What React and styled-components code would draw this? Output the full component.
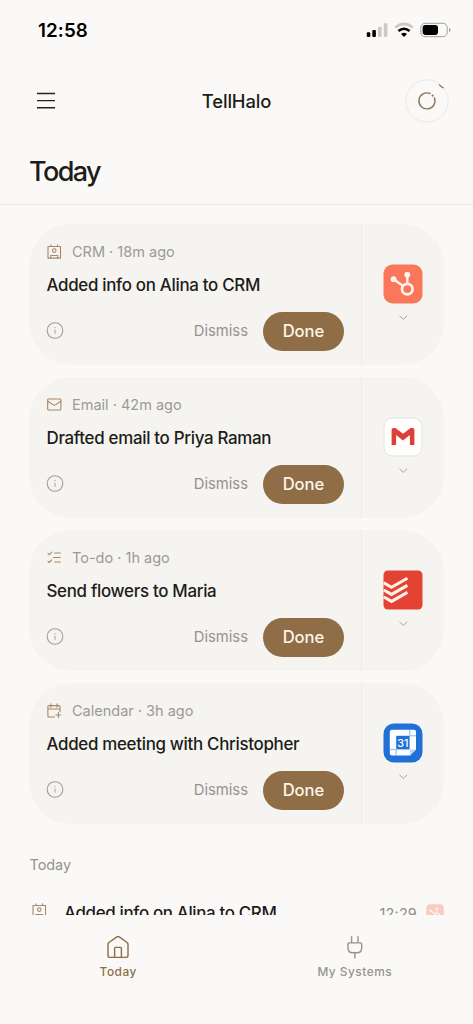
import React from "react";
import styled, { createGlobalStyle } from "styled-components";

const bronze = "#8f6d47";

const HaloIcon = () => (
  <svg width="44" height="44" viewBox="0 0 44 44" fill="none">
    <circle cx="22" cy="22" r="21.2" stroke="#ebe9e5" strokeWidth="1" />
    <path d="M34 5.4L36.2 7.8L38.6 8.8" stroke="#8b7a65" strokeWidth="1.3" />
    <path
      d="M25 14.5A8 8 0 1 0 29.4 19"
      stroke="#8a7552"
      strokeWidth="1.4"
      strokeLinecap="round"
    />
    <circle cx="27.6" cy="16.6" r="1.1" fill="#8a7552" />
  </svg>
);

const StatusIcons = () => (
  <svg width="86" height="18" viewBox="0 0 86 18">
    <rect x="0.8" y="10.2" width="3.5" height="4.8" rx="1" fill="#000" />
    <rect x="6.3" y="8" width="3.6" height="7" rx="1" fill="#000" />
    <rect x="12" y="4.7" width="3.6" height="10.3" rx="1" fill="#cbcac8" />
    <rect x="17.8" y="1.3" width="3.6" height="13.7" rx="1" fill="#cbcac8" />
    <path
      d="M29.2 5.6Q38 -1.8 46.8 5.6"
      stroke="#c9c8c6"
      strokeWidth="2.6"
      fill="none"
    />
    <path
      d="M32.4 9.1Q38 4.4 43.6 9.1"
      stroke="#000"
      strokeWidth="2.6"
      fill="none"
    />
    <path d="M35 12.1Q38 9.5 41 12.1L38 15Z" fill="#000" />
    <rect
      x="54.8"
      y="1.3"
      width="26.4"
      height="13.4"
      rx="4.2"
      fill="none"
      stroke="#9f9e9c"
    />
    <rect x="56.6" y="3.1" width="15.4" height="9.8" rx="2.8" fill="#000" />
    <path d="M83 5.9Q84.6 6.6 84.6 8T83 10.1Z" fill="#9f9e9c" />
  </svg>
);

const MenuIcon = () => (
  <svg width="18" height="18" viewBox="0 0 18 18" stroke="#222" fill="none">
    <path d="M0 1.5H18M0 8.6H18M0 15.8H18" strokeWidth="1.4" />
  </svg>
);

const kindPaths = {
  crm: (
    <>
      <path d="M1 2.5H13.5V14.1H1ZM4 0.8V2.5M10.5 0.8V2.5" />
      <circle cx="7.25" cy="6.6" r="1.8" />
      <path d="M3.8 14V11.5H10.7V14" />
    </>
  ),
  email: (
    <>
      <rect x="0.7" y="2" width="13.2" height="11" rx="0.8" />
      <path d="M0.8 4.2L5.8 7.6Q7.3 8.5 8.8 7.6L13.8 4.2" />
    </>
  ),
  todo: (
    <>
      <path d="M1 3.5L2.3 4.7L4.8 2.1M1 11.3L2.3 12.5L4.8 9.9" />
      <path d="M7.6 3H13.4M6.4 7.5H13.4M7.6 12H13.4" />
    </>
  ),
  calendar: (
    <>
      <path d="M7.5 14H2Q0.9 14 0.9 13V3.6Q0.9 2.6 2 2.6H12Q13 2.6 13 3.6V8.8M0.9 6H13M4 0.8V4.2M10 0.8V4.2" />
      <path d="M11.4 9.5V14.5M8.9 12H13.9" />
    </>
  ),
};

const KindIcon = ({ kind }) => (
  <svg
    width="15"
    height="15"
    viewBox="0 0 15 15"
    fill="none"
    stroke="#a98667"
    strokeWidth="1.1"
    strokeLinecap="round"
    strokeLinejoin="round"
  >
    {kindPaths[kind]}
  </svg>
);

const InfoIcon = () => (
  <svg width="18" height="18" viewBox="0 0 18 18" fill="none" stroke="#a19f9a">
    <circle cx="9" cy="8.5" r="7.8" strokeWidth="1.1" />
    <path d="M9 7.7V11.7" />
    <circle cx="9" cy="5.6" r="0.7" fill="#a19f9a" stroke="none" />
  </svg>
);

const Chevron = () => (
  <svg width="9" height="6" viewBox="0 0 9 6" fill="none" stroke="#a3a19d">
    <path d="M0.5 0.8L4.3 4.4L8.1 0.8" />
  </svg>
);

const HubspotLogo = () => (
  <svg width="40" height="40" viewBox="0 0 40 40">
    <rect x="0.5" y="0.5" width="39" height="39" rx="9" fill="#fb7759" />
    <g stroke="#fff3ec" fill="none">
      <circle cx="24.3" cy="25.1" r="5.3" strokeWidth="2.7" />
      <path d="M24.3 19.5V11M19.8 21.8L11 15.5" strokeWidth="2.4" />
    </g>
    <rect x="21.5" y="8" width="5.6" height="5.4" rx="1.8" fill="#fff3ec" />
    <circle cx="10.6" cy="15.2" r="2.9" fill="#fff3ec" />
  </svg>
);

const GmailLogo = () => (
  <svg width="40" height="40" viewBox="0 0 40 40">
    <rect
      x="1"
      y="1"
      width="38"
      height="38"
      rx="8.5"
      fill="#fefefd"
      stroke="#e4e3df"
    />
    <path
      d="M8.6 12.8Q8.6 11 10.4 11H12.4L20 16.8L27.6 11H29.6Q31.4 11 31.4 12.8V28H26.9V18L20 23.4L13.1 18V28H8.6Z"
      fill="#dd4038"
    />
  </svg>
);

const TodoistLogo = () => (
  <svg width="40" height="40" viewBox="0 0 40 40">
    <rect x="0.5" y="0.5" width="39" height="39" rx="4.5" fill="#e44232" />
    <path
      d="M0.8 12.9L8.5 17.3L24.4 8.3M0.8 20L8.5 24.4L24.4 15.4M0.8 27L8.5 31.4L24.4 22.4"
      stroke="#fff1e9"
      strokeWidth="3"
      fill="none"
    />
  </svg>
);

const CalendarLogo = () => (
  <svg width="40" height="40" viewBox="0 0 40 40">
    <rect x="0.5" y="0.5" width="39" height="39" rx="10.5" fill="#2070d8" />
    <path
      d="M8.8 6.8H31Q33 6.8 33 8.8V26.6L27 32.4H8.8Q6.8 32.4 6.8 30.4V8.8Q6.8 6.8 8.8 6.8Z"
      fill="#fafcff"
    />
    <path d="M13.2 12.8H26.6V26.4H13.2Z" fill="#2070d8" />
    <path
      d="M26.8 6.8V12.8H33M6.8 26.6H13V32.4"
      stroke="#7fb0ee"
      strokeWidth="0.9"
      fill="none"
    />
    <path d="M27 26.6H33L27 32.4Z" fill="#b9d4f6" />
    <text
      x="19.8"
      y="23.6"
      textAnchor="middle"
      fontFamily="Inter, sans-serif"
      fontSize="10.8"
      fontWeight="500"
      fill="#fff"
    >
      31
    </text>
  </svg>
);

const HomeIcon = () => (
  <svg
    width="24"
    height="24"
    viewBox="0 0 24 24"
    fill="none"
    stroke={bronze}
    strokeWidth="1.4"
    strokeLinejoin="round"
  >
    <path d="M2 9.4Q2 8.3 2.9 7.5L10.8 1.9Q12 1.1 13.2 1.9L21.1 7.5Q22 8.3 22 9.4V20.6Q22 22.4 20.2 22.4H3.8Q2 22.4 2 20.6Z" />
    <path d="M8.6 22.4V13.3Q8.6 12.4 9.5 12.4H14.5Q15.4 12.4 15.4 13.3V22.4" />
  </svg>
);

const PlugIcon = () => (
  <svg
    width="24"
    height="24"
    viewBox="0 0 24 24"
    fill="none"
    stroke="#969490"
    strokeWidth="1.4"
  >
    <path d="M8.6 1.2V7.6M15 1.2V7.6M11.8 17.8V23.6" />
    <path d="M5 9Q5 7.9 6.1 7.9H17.6Q18.7 7.9 18.7 9V13Q18.7 17.8 13.9 17.8H9.8Q5 17.8 5 13Z" />
  </svg>
);

const cards = [
  {
    kind: "crm",
    meta: "CRM · 18m ago",
    title: "Added info on Alina to CRM",
    Logo: HubspotLogo,
  },
  {
    kind: "email",
    meta: "Email · 42m ago",
    title: "Drafted email to Priya Raman",
    Logo: GmailLogo,
  },
  {
    kind: "todo",
    meta: "To-do · 1h ago",
    title: "Send flowers to Maria",
    Logo: TodoistLogo,
  },
  {
    kind: "calendar",
    meta: "Calendar · 3h ago",
    title: "Added meeting with Christopher",
    Logo: CalendarLogo,
  },
];

const Card = ({ kind, meta, title, Logo }) => (
  <CardBox>
    <CardMain>
      <Meta>
        <KindIcon kind={kind} />
        {meta}
      </Meta>
      <CardTitle>{title}</CardTitle>
      <Actions>
        <InfoIcon />
        <Dismiss>Dismiss</Dismiss>
        <Done>Done</Done>
      </Actions>
    </CardMain>
    <CardSide>
      <Logo />
      <Chevron />
    </CardSide>
  </CardBox>
);

const App = () => {
  return (
    <Screen>
      <GlobalStyle />
      <StatusBar>
        <Clock>12:58</Clock>
        <StatusIcons />
      </StatusBar>
      <Header>
        <MenuIcon />
        <Brand>TellHalo</Brand>
        <HaloIcon />
      </Header>
      <PageTitle>Today</PageTitle>
      <Feed>
        <CardList>
          {cards.map((card) => (
            <Card key={card.kind} {...card} />
          ))}
        </CardList>
        <SectionLabel>Today</SectionLabel>
        <HistoryRow>
          <KindIcon kind="crm" />
          <HistoryTitle>Added info on Alina to CRM</HistoryTitle>
          <HistoryTime>12:29</HistoryTime>
          <HistoryBadge>
            <HubspotLogo />
          </HistoryBadge>
        </HistoryRow>
      </Feed>
      <TabBar>
        <Tab $active>
          <HomeIcon />
          Today
        </Tab>
        <Tab>
          <PlugIcon />
          My Systems
        </Tab>
      </TabBar>
    </Screen>
  );
};

export default App;

const GlobalStyle = createGlobalStyle`
  * {
    box-sizing: border-box;
  }
  body {
    margin: 0;
    background: #faf9f7;
    font-family: Inter, "Liberation Sans", sans-serif;
  }
  svg {
    display: block;
    flex-shrink: 0;
  }
`;

const Screen = styled.div`
  display: flex;
  flex-direction: column;
  width: 473px;
  height: 1024px;
  overflow: hidden;
  background: #faf9f7;
  color: #1d1c1a;
`;

const StatusBar = styled.div`
  display: flex;
  justify-content: space-between;
  align-items: center;
  height: 62px;
  padding: 0 21px 0 38px;
`;

const Clock = styled.div`
  padding-bottom: 2px;
  font-size: 18.8px;
  font-weight: 600;
  letter-spacing: 0.1px;
  color: #000;
`;

const Header = styled.div`
  display: flex;
  justify-content: space-between;
  align-items: center;
  height: 78px;
  padding: 0 24px 0 37px;
`;

const Brand = styled.div`
  padding-left: 13px;
  font-size: 18.4px;
  font-weight: 500;
  letter-spacing: -0.15px;
`;

const PageTitle = styled.h1`
  margin: 0;
  height: 65px;
  padding: 14px 29px 0;
  border-bottom: 1px solid #eae9e6;
  font-size: 27px;
  line-height: 36px;
  font-weight: 500;
  letter-spacing: -1.6px;
`;

const Feed = styled.div`
  height: 710px;
  padding: 19px 29px 0;
  overflow: hidden;
`;

const CardList = styled.div`
  display: flex;
  flex-direction: column;
  gap: 12px;
`;

const CardBox = styled.div`
  display: flex;
  height: 141px;
  border-radius: 42px;
  background: #f5f4f0;
`;

const CardMain = styled.div`
  display: flex;
  flex-direction: column;
  width: 333px;
  padding: 17px 17px 0;
  border-right: 1px solid #ebeae6;
`;

const Meta = styled.div`
  display: flex;
  align-items: center;
  gap: 10px;
  height: 20px;
  padding-left: 1px;
  font-size: 14.5px;
  color: #9c9a96;
`;

const CardTitle = styled.div`
  margin-top: 12px;
  height: 24px;
  padding-left: 0.5px;
  font-size: 16.9px;
  line-height: 24px;
  font-weight: 500;
  letter-spacing: -0.3px;
  white-space: nowrap;
`;

const Actions = styled.div`
  display: flex;
  align-items: center;
  margin-top: 14.5px;
`;

const Dismiss = styled.div`
  margin-left: auto;
  margin-right: 15px;
  font-size: 14.8px;
  color: #94928e;
`;

const Done = styled.button`
  width: 81px;
  height: 39px;
  padding: 0;
  border: none;
  border-radius: 20px;
  background: ${bronze};
  color: #fdf6ea;
  font-family: inherit;
  font-size: 16.6px;
  font-weight: 500;
`;

const CardSide = styled.div`
  display: flex;
  flex: 1;
  flex-direction: column;
  align-items: center;
  gap: 11px;
  padding-top: 40px;
`;

const SectionLabel = styled.div`
  margin-top: 31px;
  padding-left: 0.5px;
  font-size: 14.4px;
  line-height: 20px;
  color: #94928e;
`;

const HistoryRow = styled.div`
  display: flex;
  align-items: center;
  height: 40px;
  margin-top: 18px;
  padding-left: 2.5px;

  > svg {
    margin-bottom: 6px;
  }
`;

const HistoryTitle = styled.div`
  flex: 1;
  margin-left: 17.5px;
  font-size: 16.9px;
  font-weight: 500;
  letter-spacing: -0.34px;
`;

const HistoryTime = styled.div`
  font-size: 14.4px;
  letter-spacing: 0.2px;
  color: #8f8d89;
`;

const HistoryBadge = styled.div`
  margin-left: 9px;
  opacity: 0.35;

  svg {
    width: 18px;
    height: 18px;
  }
`;

const TabBar = styled.div`
  display: grid;
  grid-template-columns: 1fr 1fr;
  height: 109px;
  padding-top: 20px;
  background: #faf9f7;
`;

const Tab = styled.div`
  display: flex;
  flex-direction: column;
  align-items: center;
  gap: 5px;
  font-size: 11.9px;
  line-height: 16px;
  font-weight: 500;
  letter-spacing: 0.5px;
  color: ${({ $active }) => ($active ? bronze : "#969490")};
`;
